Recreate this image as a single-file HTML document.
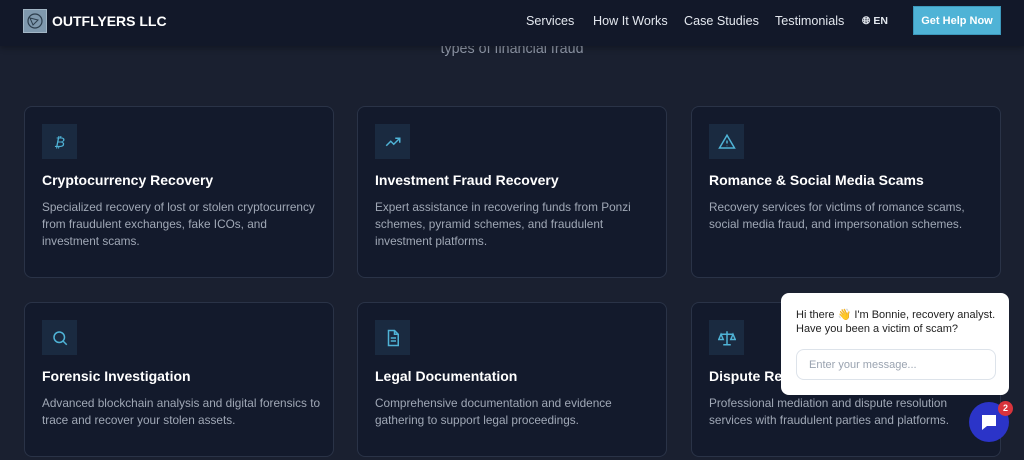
<!DOCTYPE html>
<html><head><meta charset="utf-8"><style>
*{box-sizing:border-box;margin:0;padding:0}
body{width:1024px;height:460px;overflow:hidden;background:#1a2030;font-family:"Liberation Sans",sans-serif;position:relative}
.hdr{position:absolute;left:0;top:0;width:1024px;height:46px;background:#121829;box-shadow:0 2px 6px rgba(0,0,0,.3);z-index:5}
.logo{position:absolute;left:23px;top:9px;width:24px;height:24px;background:#7f98ad;border:1px solid #a3b6c5}
.brand{position:absolute;left:52px;top:13px;color:#fff;font-weight:bold;font-size:14px}
.nav{position:absolute;top:14px;color:#e3e7ee;font-size:12.6px}
.btn{position:absolute;left:913px;top:6px;width:88px;height:29px;background:#4fb3d6;border:1px solid #3c98bb;color:#fff;font-size:11px;font-weight:bold;display:flex;align-items:center;justify-content:center}
.sub{position:absolute;left:0;width:1024px;top:41px;text-align:center;color:#8e96a6;font-size:14.3px}
.card{position:absolute;width:310px;background:#131a2c;border:1px solid #2a3347;border-radius:8px}
.ic{position:absolute;left:17px;top:17px;width:35px;height:35px;background:#1a2a40;display:flex;align-items:center;justify-content:center}
.t{position:absolute;left:17px;top:65px;color:#fff;font-weight:bold;font-size:14px}
.d{position:absolute;left:17px;top:92px;width:281px;color:#a0a8b6;font-size:11.8px;line-height:17px}
.chat{position:absolute;left:781px;top:293px;width:228px;height:102px;background:#fff;border-radius:8px;z-index:6}
.chat p{position:absolute;left:15px;top:15px;font-size:11px;color:#222;line-height:14px}
.inp{position:absolute;left:15px;top:56px;width:200px;height:31px;border:1px solid #dde3ea;border-radius:8px;color:#9aa3b0;font-size:11px;padding:9px 12px}
.fab{position:absolute;left:969px;top:402px;width:40px;height:40px;border-radius:50%;background:#2b34c8;z-index:6}
.badge{position:absolute;left:998px;top:401px;width:15px;height:15px;border-radius:50%;background:#d9343c;color:#fff;font-size:9px;font-weight:bold;text-align:center;line-height:15px;z-index:7}
</style></head><body>
<div class="hdr">
<div class="logo"><svg width="22" height="22" viewBox="0 0 22 22"><circle cx="11" cy="11" r="7" fill="none" stroke="#2c3d4c" stroke-width="1.2"/><path d="M6 8l8 2-5 5z" fill="none" stroke="#2c3d4c" stroke-width="1"/></svg></div>
<div class="brand">OUTFLYERS LLC</div>
<div class="nav" style="left:526px">Services</div>
<div class="nav" style="left:593px">How It Works</div>
<div class="nav" style="left:684px">Case Studies</div>
<div class="nav" style="left:775px">Testimonials</div>
<div class="nav" style="left:862px;font-size:10.5px;font-weight:bold;top:15px">&#x1F310;&#xFE0E; EN</div>
<div class="btn">Get Help Now</div>
</div>
<div class="sub">types of financial fraud</div>

<div class="card" style="left:24px;top:106px;height:172px"><div class="ic"><span style="color:#4fb3d6;font-size:14px;font-style:italic">₿</span></div><div class="t">Cryptocurrency Recovery</div><div class="d">Specialized recovery of lost or stolen cryptocurrency from fraudulent exchanges, fake ICOs, and investment scams.</div></div>
<div class="card" style="left:357px;top:106px;height:172px"><div class="ic"><svg width="18" height="18" viewBox="0 0 24 24" fill="none" stroke="#4fb3d6" stroke-width="2"><path d="M3 17l6-6 4 4 8-8M15 7h6v6"/></svg></div><div class="t">Investment Fraud Recovery</div><div class="d">Expert assistance in recovering funds from Ponzi schemes, pyramid schemes, and fraudulent investment platforms.</div></div>
<div class="card" style="left:691px;top:106px;height:172px"><div class="ic"><svg width="18" height="18" viewBox="0 0 24 24" fill="none" stroke="#4fb3d6" stroke-width="2"><path d="M12 3L2 20h20z M12 10v4 M12 17v.5"/></svg></div><div class="t">Romance &amp; Social Media Scams</div><div class="d">Recovery services for victims of romance scams, social media fraud, and impersonation schemes.</div></div>

<div class="card" style="left:24px;top:302px;height:155px"><div class="ic"><svg width="18" height="18" viewBox="0 0 24 24" fill="none" stroke="#4fb3d6" stroke-width="2"><circle cx="11" cy="11" r="7"/><path d="M16 16l5 5"/></svg></div><div class="t">Forensic Investigation</div><div class="d">Advanced blockchain analysis and digital forensics to trace and recover your stolen assets.</div></div>
<div class="card" style="left:357px;top:302px;height:155px"><div class="ic"><svg width="18" height="18" viewBox="0 0 24 24" fill="none" stroke="#4fb3d6" stroke-width="2"><path d="M6 2h8l5 5v15H6z M14 2v5h5 M9 12h7 M9 16h7"/></svg></div><div class="t">Legal Documentation</div><div class="d">Comprehensive documentation and evidence gathering to support legal proceedings.</div></div>
<div class="card" style="left:691px;top:302px;height:155px"><div class="ic"><svg width="18" height="18" viewBox="0 0 24 24" fill="none" stroke="#4fb3d6" stroke-width="2"><path d="M12 3v18 M7 21h10 M4 7h16 M4 7l-3 7h6z M20 7l-3 7h6z"/></svg></div><div class="t">Dispute Resolution</div><div class="d">Professional mediation and dispute resolution services with fraudulent parties and platforms.</div></div>

<div class="chat"><p>Hi there 👋 I'm Bonnie, recovery analyst.<br>Have you been a victim of scam?</p><div class="inp">Enter your message...</div></div>
<div class="fab"><svg width="40" height="40" viewBox="0 0 40 40"><path d="M13 13h14v11h-9l-5 4z" fill="#fff"/></svg></div>
<div class="badge">2</div>
</body></html>
